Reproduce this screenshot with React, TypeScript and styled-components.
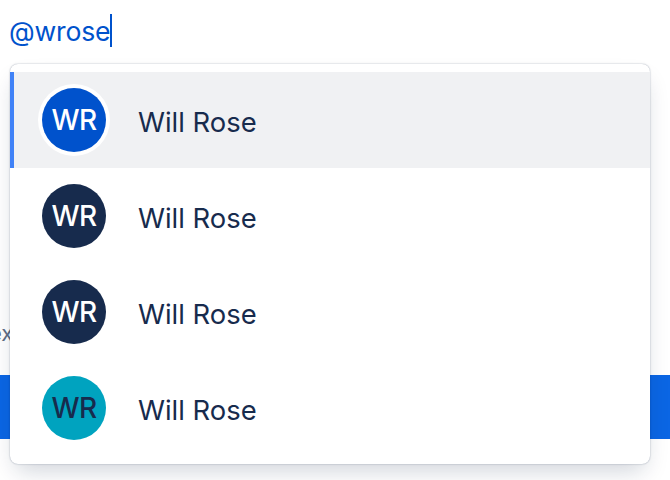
import styled, { createGlobalStyle } from "styled-components";

const GlobalStyle = createGlobalStyle`
  html, body {
    margin: 0;
    padding: 0;
    background: white;
    font-family: Inter, "Liberation Sans", sans-serif;
  }
`

const Page = styled.div`
  position: relative;
  width: 670px;
  height: 480px;
  overflow: hidden;
  background: white;
`
const InputRow = styled.div`
  display: flex;
  align-items: center;
  box-sizing: border-box;
  height: 64px;
  padding: 0 0 3px 9px;
`
const InputText = styled.span`
  padding-top: 1px;
  color: #0052cc;
  font-size: 26.6px;
  line-height: 32px;
  letter-spacing: -0.2px;
`
const Caret = styled.span`
  display: block;
  width: 2px;
  height: 33px;
  background: #0052cc;
`
const HelpText = styled.div`
  margin: 256px 0 0;
  height: 26px;
  color: #5e6c84;
  font-size: 22px;
  line-height: 26px;
  text-indent: -11px;
  white-space: nowrap;
`
const SubmitBar = styled.div`
  height: 64px;
  margin-top: 29px;
  background: #0b66e4;
`
const Popup = styled.div`
  position: absolute;
  top: 64px;
  left: 10px;
  box-sizing: border-box;
  width: 640px;
  padding: 8px 0;
  background: white;
  border-radius: 8px;
  box-shadow: 0 12px 24px -6px rgba(9, 30, 66, 0.2), 0 0 1.5px rgba(9, 30, 66, 0.45);
`
const Row = styled.div<{ $active?: boolean }>`
  display: flex;
  align-items: center;
  gap: 32px;
  box-sizing: border-box;
  height: 96px;
  background: ${(p) => (p.$active ? "#f0f1f3" : "white")};
  border-left: ${(p) => (p.$active ? "4px solid #4082f7" : "none")};
  padding-left: ${(p) => (p.$active ? "28px" : "32px")};
`
const Avatar = styled.div<{ $bg: string; $fg: string; $ring?: boolean }>`
  display: flex;
  align-items: center;
  justify-content: center;
  flex-shrink: 0;
  box-sizing: border-box;
  width: 64px;
  height: 64px;
  padding-bottom: 1px;
  border-radius: 50%;
  background: ${(p) => p.$bg};
  color: ${(p) => p.$fg};
  font-size: 28px;
  font-weight: 500;
  letter-spacing: -0.5px;
  box-shadow: ${(p) => (p.$ring ? "0 0 0 4px white" : "none")};
`
const Name = styled.span`
  padding-top: 3px;
  color: #172b4d;
  font-size: 27.4px;
  line-height: 32px;
`

const people = [
  { bg: "#0052cc", fg: "white", active: true },
  { bg: "#172b4d", fg: "white" },
  { bg: "#172b4d", fg: "white" },
  { bg: "#00a3bf", fg: "#172b4d" },
];

const App = () => {
  return (
    <Page>
      <GlobalStyle />
      <InputRow>
        <InputText>@wrose</InputText>
        <Caret />
      </InputRow>
      <HelpText>ex</HelpText>
      <SubmitBar />
      <Popup>
        {people.map((item, i) => (
          <Row key={i} $active={item.active}>
            <Avatar $bg={item.bg} $fg={item.fg} $ring={item.active}>WR</Avatar>
            <Name>Will Rose</Name>
          </Row>
        ))}
      </Popup>
    </Page>
  );
};

export default App;
